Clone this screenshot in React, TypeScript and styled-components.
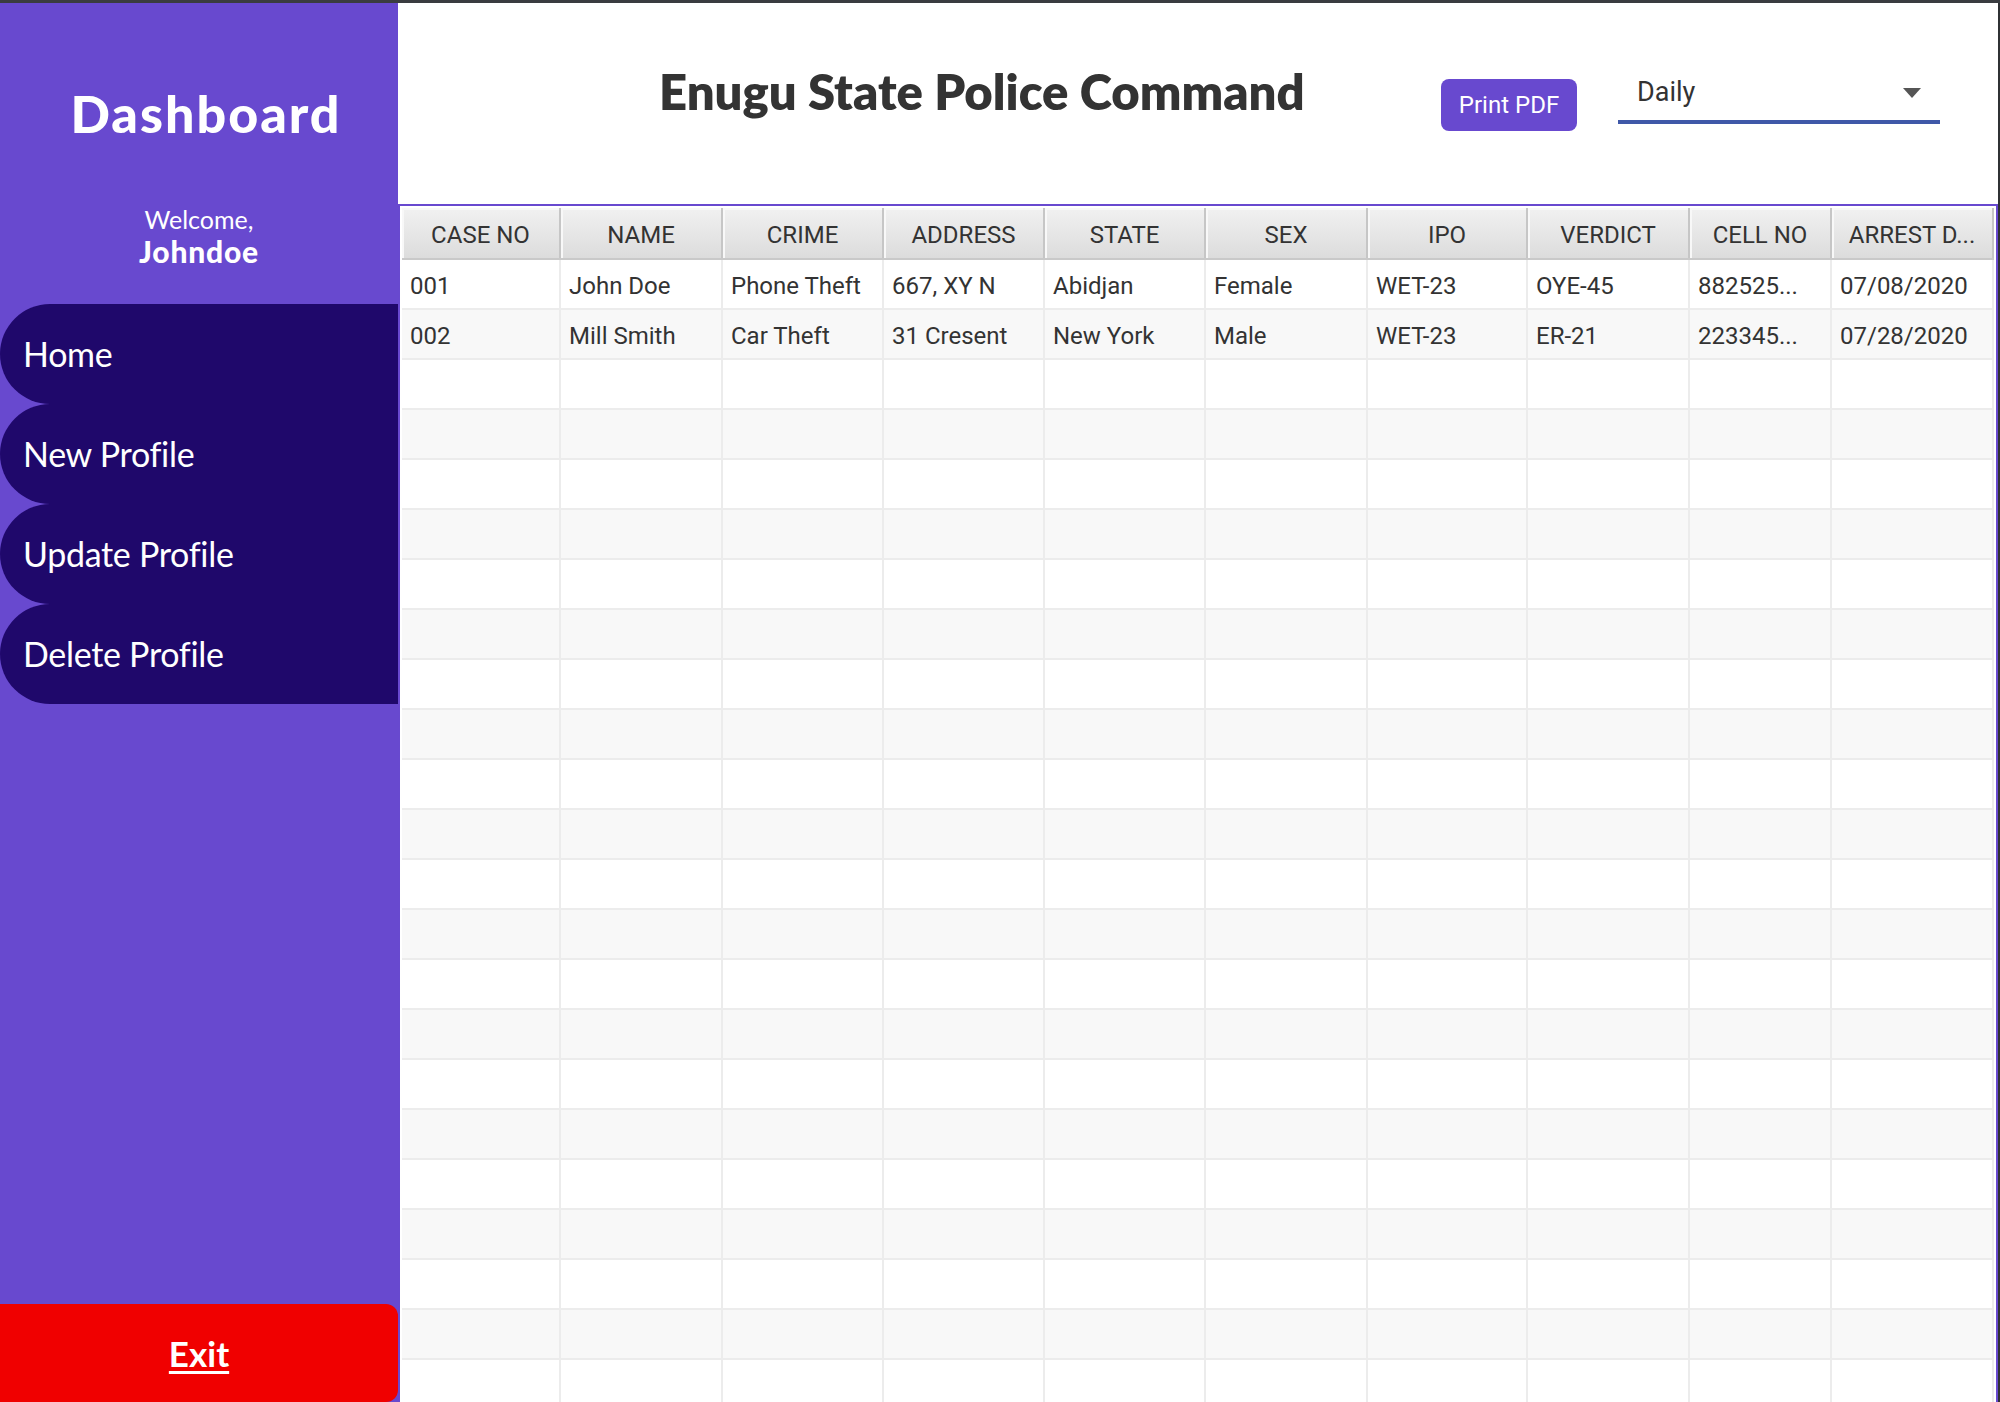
import React from 'react';
import styled, { createGlobalStyle } from 'styled-components';

const GlobalStyle = createGlobalStyle`
  html, body {
    margin: 0;
    padding: 0;
    background: #2f3134;
    overflow: hidden;
  }
  * {
    box-sizing: border-box;
  }
`;

const columns = [
  { title: 'CASE NO', width: 159 },
  { title: 'NAME', width: 162 },
  { title: 'CRIME', width: 161 },
  { title: 'ADDRESS', width: 161 },
  { title: 'STATE', width: 161 },
  { title: 'SEX', width: 162 },
  { title: 'IPO', width: 160 },
  { title: 'VERDICT', width: 162 },
  { title: 'CELL NO', width: 142 },
  { title: 'ARREST D...', width: 162 },
];

const records = [
  ['001', 'John Doe', 'Phone Theft', '667, XY N', 'Abidjan', 'Female', 'WET-23', 'OYE-45', '882525...', '07/08/2020'],
  ['002', 'Mill Smith', 'Car Theft', '31 Cresent', 'New York', 'Male', 'WET-23', 'ER-21', '223345...', '07/28/2020'],
];

const TOTAL_ROWS = 23;
const gridColumns = columns.map((c) => `${c.width}px`).join(' ');

const Page = styled.div`
  width: 2000px;
  height: 1402px;
  display: flex;
  flex-direction: column;
`;

const TopStrip = styled.div`
  height: 3px;
  background: #3a3c40;
`;

const Body = styled.div`
  flex: 1;
  display: flex;
  min-height: 0;
`;

const Sidebar = styled.aside`
  width: 398px;
  flex: 0 0 398px;
  background: #6849cf;
  display: flex;
  flex-direction: column;
  align-items: stretch;
  font-family: Lato, "Open Sans", sans-serif;
  color: #fff;
`;

const Brand = styled.h1`
  margin: 84px 0 0 14px;
  font-size: 52px;
  line-height: 1;
  font-weight: 900;
  text-align: center;
  letter-spacing: 2px;
`;

const Welcome = styled.div`
  margin-top: 68px;
  text-align: center;
  font-size: 25px;
  line-height: 1;
`;

const UserName = styled.div`
  margin-top: 4px;
  text-align: center;
  font-size: 30px;
  line-height: 1;
  font-weight: 900;
  letter-spacing: 0.8px;
`;

const Menu = styled.nav`
  margin-top: 38px;
  display: flex;
  flex-direction: column;
`;

const MenuItem = styled.div`
  height: 100px;
  background: #1f086b;
  border-radius: 50px 0 0 50px;
  display: flex;
  align-items: center;
  padding-left: 23px;
  font-size: 34px;
  letter-spacing: -0.3px;
  line-height: 1;
`;

const ExitButton = styled.div`
  margin-top: auto;
  height: 98px;
  background: #f00000;
  border-radius: 0 12px 12px 0;
  display: flex;
  align-items: center;
  justify-content: center;
  font-size: 35px;
  font-weight: 700;
  text-decoration: underline;
  text-underline-offset: 4px;
`;

const Main = styled.main`
  flex: 1;
  display: flex;
  flex-direction: column;
  background: #fff;
  min-width: 0;
`;

const RightEdge = styled.div`
  width: 2px;
  flex: 0 0 2px;
  background: #2f3134;
`;

const Header = styled.header`
  height: 201px;
  flex: 0 0 201px;
  display: flex;
  align-items: flex-start;
  padding-left: 261px;
`;

const Title = styled.h2`
  margin: 64px 0 0 0;
  width: 782px;
  flex: 0 0 782px;
  font-family: Lato, "Open Sans", sans-serif;
  font-size: 49px;
  line-height: 1;
  font-weight: 800;
  letter-spacing: 0;
  color: #333;
  white-space: nowrap;
`;

const PrintButton = styled.button`
  margin-top: 76px;
  width: 136px;
  height: 52px;
  border: none;
  border-radius: 8px;
  background: #6849cf;
  color: #fff;
  font-family: Roboto, "Noto Sans", sans-serif;
  font-size: 24px;
  padding: 0;
`;

const Select = styled.div`
  margin: 76px 0 0 41px;
  width: 322px;
  height: 45px;
  border-bottom: 4px solid #3f58a8;
  display: flex;
  justify-content: space-between;
  align-items: flex-start;
  padding: 0 19px;
  font-family: Roboto, "Noto Sans", sans-serif;
  font-size: 27px;
  line-height: 1;
  color: #333;
`;

const Caret = styled.span`
  margin-top: 9px;
  width: 0;
  height: 0;
  border-left: 9px solid transparent;
  border-right: 9px solid transparent;
  border-top: 10px solid #555;
`;

const TableBox = styled.section`
  flex: 1;
  min-height: 0;
  overflow: hidden;
  border: 2px solid #6849cf;
  border-bottom: none;
  padding: 2px 2px 0 2px;
  font-family: Roboto, "Noto Sans", sans-serif;
  color: #333;
`;

const HeadRow = styled.div`
  display: grid;
  grid-template-columns: ${gridColumns};
  height: 52px;
  border-bottom: 2px solid #c9c9c9;
`;

const HeadCell = styled.div`
  display: flex;
  align-items: center;
  justify-content: center;
  padding-top: 4px;
  background: linear-gradient(#f1f1f1, #dcdcdc);
  border-right: 2px solid #c6c6c6;
  box-shadow: inset 2px 2px 0 #f8f8f8;
  font-size: 24px;
  white-space: nowrap;
  overflow: hidden;
`;

const Row = styled.div<{ $striped: boolean }>`
  display: grid;
  grid-template-columns: ${gridColumns};
  height: 50px;
  background: ${(p) => (p.$striped ? '#f8f8f8' : '#fff')};
  border-bottom: 2px solid #ececec;
`;

const Cell = styled.div`
  display: flex;
  align-items: center;
  padding: 3px 0 0 8px;
  border-right: 2px solid #ececec;
  font-size: 24px;
  white-space: nowrap;
  overflow: hidden;
`;

export default function App() {
  const rows = Array.from({ length: TOTAL_ROWS }, (_, i) => records[i] ?? columns.map(() => ''));

  return (
    <Page>
      <GlobalStyle />
      <TopStrip />
      <Body>
        <Sidebar>
          <Brand>Dashboard</Brand>
          <Welcome>Welcome,</Welcome>
          <UserName>Johndoe</UserName>
          <Menu>
            <MenuItem>Home</MenuItem>
            <MenuItem>New Profile</MenuItem>
            <MenuItem>Update Profile</MenuItem>
            <MenuItem>Delete Profile</MenuItem>
          </Menu>
          <ExitButton>Exit</ExitButton>
        </Sidebar>
        <Main>
          <Header>
            <Title>Enugu State Police Command</Title>
            <PrintButton>Print PDF</PrintButton>
            <Select>
              <span>Daily</span>
              <Caret />
            </Select>
          </Header>
          <TableBox>
            <HeadRow>
              {columns.map((c) => (
                <HeadCell key={c.title}>{c.title}</HeadCell>
              ))}
            </HeadRow>
            {rows.map((row, i) => (
              <Row key={i} $striped={i % 2 === 1}>
                {row.map((value, j) => (
                  <Cell key={j}>{value}</Cell>
                ))}
              </Row>
            ))}
          </TableBox>
        </Main>
        <RightEdge />
      </Body>
    </Page>
  );
}
